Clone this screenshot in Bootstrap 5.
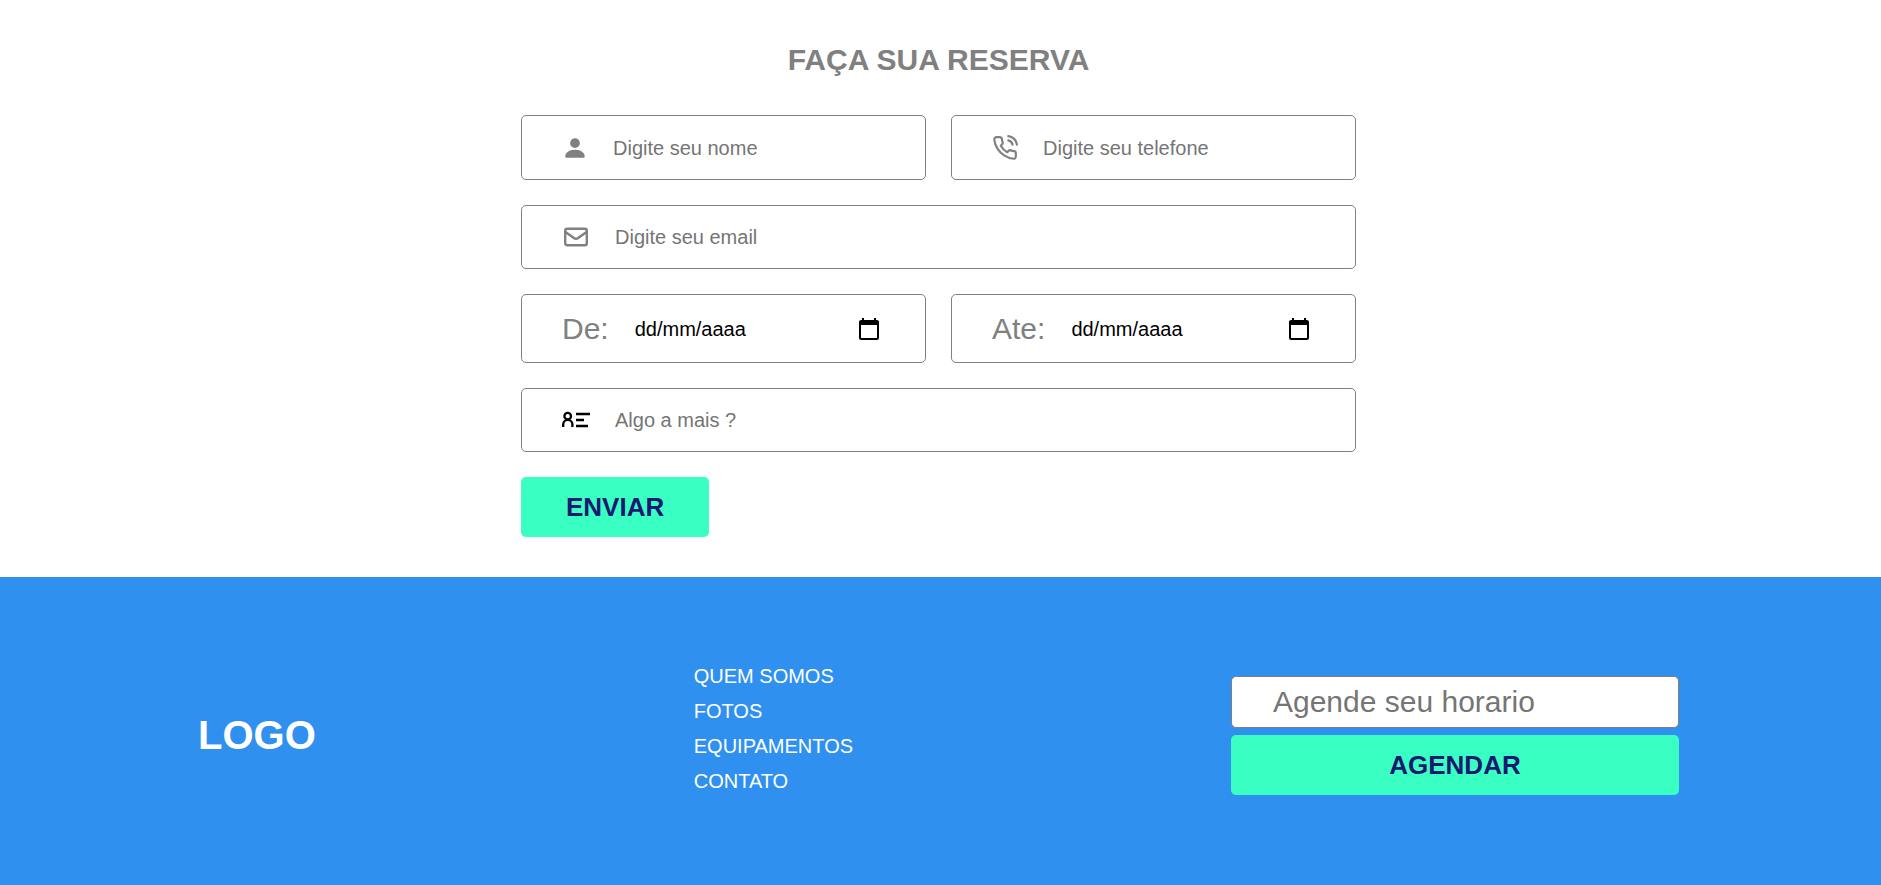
<!DOCTYPE html>
<html lang="pt-BR">
<head>
<meta charset="utf-8">
<meta name="viewport" content="width=device-width, initial-scale=1">
<title>Reserva</title>
<link href="https://cdn.jsdelivr.net/npm/bootstrap@5.3.0/dist/css/bootstrap.min.css" rel="stylesheet">
<style>
  body { font-family: "Liberation Sans", Arial, sans-serif; font-size: 20px; color: #000; background: #fff; }
  .booking { padding-top: 42px; padding-bottom: 40px; }
  .booking form { max-width: 835px; }
  .booking-title { font-size: 30px; line-height: 36px; font-weight: 700; color: #808080; margin-bottom: 37px; }
  .field-grid { display: grid; grid-template-columns: repeat(2, minmax(0, 1fr)); gap: 25px; }
  .span-all { grid-column: 1 / -1; }
  .field { min-height: 64px; padding: 0 40px; gap: 25px; border: 1px solid #808080; border-radius: 5px; }
  .field-short { min-height: 65px; }
  .field-date { min-height: 69px; }
  .field label { color: #808080; font-size: 30px; line-height: 36px; }
  .field label svg { display: block; }
  .field label.dark { color: #000; }
  .field input { flex: 1 1 0; min-width: 0; padding: 0; border: 0; outline: 0; background: transparent; line-height: 24px; }
  input::placeholder { color: #757575; opacity: 1; }
  .field-date input { padding-left: 1px; }
  .field-date input::placeholder { color: #000; }
  .picker { padding: 0; border: 0; background: none; color: #000; }
  .picker svg { display: block; }
  .btn-mint { --bs-btn-bg: #39ffc3; --bs-btn-hover-bg: #22e5aa; --bs-btn-color: #191970; --bs-btn-hover-color: #191970;
    --bs-btn-border-width: 0; font-size: 26px; line-height: 30px; font-weight: 700; padding: 15px 45px; border-radius: 5px; }
  .site-footer { background: #2f90f0; padding-top: 88px; padding-bottom: 80px; }
  .footer-row { max-width: 1481px; }
  .brand { font-size: 40px; line-height: 48px; font-weight: 700; }
  .footer-links li { line-height: 23px; margin-bottom: 12px; }
  .schedule { width: 448px; gap: 7px; }
  .schedule input { font-size: 30px; line-height: 34px; padding: 8px 41px; border: 1px solid #808080; border-radius: 5px; background: #fff; }
</style>
</head>
<body class="d-flex flex-column min-vh-100">
<main class="booking pe-1">
  <form class="mx-auto">
    <h1 class="booking-title text-center">FAÇA SUA RESERVA</h1>
    <div class="field-grid">
      <div class="field field-short d-flex align-items-center">
        <label for="nome" aria-label="Nome"><svg width="26" height="26" viewBox="0 0 16 16" fill="currentColor"><path d="M3 14s-1 0-1-1 1-4 6-4 6 3 6 4-1 1-1 1H3Zm5-6a3 3 0 1 0 0-6 3 3 0 0 0 0 6Z"/></svg></label>
        <input type="text" id="nome" placeholder="Digite seu nome">
      </div>
      <div class="field field-short d-flex align-items-center">
        <label for="telefone" aria-label="Telefone"><svg width="26" height="26" viewBox="0 0 24 24" fill="none" stroke="currentColor" stroke-width="2" stroke-linecap="round" stroke-linejoin="round"><path d="M15.05 5A5 5 0 0 1 19 8.95M15.05 1A9 9 0 0 1 23 8.94M22 16.92v3a2 2 0 0 1-2.18 2 19.79 19.79 0 0 1-8.63-3.07 19.5 19.5 0 0 1-6-6 19.79 19.79 0 0 1-3.07-8.67A2 2 0 0 1 4.11 2h3a2 2 0 0 1 2 1.72 12.84 12.84 0 0 0 .7 2.81 2 2 0 0 1-.45 2.11L8.09 9.91a16 16 0 0 0 6 6l1.27-1.27a2 2 0 0 1 2.11-.45 12.84 12.84 0 0 0 2.81.7A2 2 0 0 1 22 16.92z"/></svg></label>
        <input type="tel" id="telefone" placeholder="Digite seu telefone">
      </div>
      <div class="field span-all d-flex align-items-center">
        <label for="email" aria-label="Email"><svg width="28" height="28" viewBox="0 0 28 28" fill="none" stroke="currentColor" stroke-width="2.400" stroke-linecap="round" stroke-linejoin="round"><rect x="3.200" y="5.700" width="21.600" height="16.600" rx="2"/><path d="M3.500 9l8.700 6.200q1.800 1.200 3.600 0L24.500 9"/></svg></label>
        <input type="email" id="email" placeholder="Digite seu email">
      </div>
      <div class="field field-date d-flex align-items-center">
        <label for="de">De:</label>
        <input type="text" id="de" placeholder="dd/mm/aaaa">
        <button type="button" class="picker me-1" aria-label="Abrir calendário"><svg width="24" height="24" viewBox="0 0 24 24" fill="currentColor"><path d="M20 3h-1V1h-2v2H7V1H5v2H4c-1.100 0-2 .9-2 2v16c0 1.100.9 2 2 2h16c1.100 0 2-.9 2-2V5c0-1.100-.9-2-2-2zm0 18H4V8h16v13z"/></svg></button>
      </div>
      <div class="field field-date d-flex align-items-center">
        <label for="ate">Ate:</label>
        <input type="text" id="ate" placeholder="dd/mm/aaaa">
        <button type="button" class="picker me-1" aria-label="Abrir calendário"><svg width="24" height="24" viewBox="0 0 24 24" fill="currentColor"><path d="M20 3h-1V1h-2v2H7V1H5v2H4c-1.100 0-2 .9-2 2v16c0 1.100.9 2 2 2h16c1.100 0 2-.9 2-2V5c0-1.100-.9-2-2-2zm0 18H4V8h16v13z"/></svg></button>
      </div>
      <div class="field span-all d-flex align-items-center">
        <label for="extra" class="dark" aria-label="Observações"><svg width="28" height="28" viewBox="0 0 28 28" fill="none" stroke="currentColor" stroke-width="2.300"><circle cx="5.700" cy="10.200" r="3.300"/><path d="M1.200 21v-2.500a4.600 4.600 0 0 1 9.200 0V21M14 8h14M14 14h8M14 20h12"/></svg></label>
        <input type="text" id="extra" placeholder="Algo a mais ?">
      </div>
      <div class="span-all"><button type="submit" class="btn btn-mint d-block">ENVIAR</button></div>
    </div>
  </form>
</main>
<footer class="site-footer pe-1 flex-grow-1 text-white">
  <div class="footer-row mx-auto d-flex justify-content-between align-items-center">
    <div class="brand">LOGO</div>
    <ul class="footer-links list-unstyled mb-0">
      <li><a href="#" class="text-white text-decoration-none">QUEM SOMOS</a></li>
      <li><a href="#" class="text-white text-decoration-none">FOTOS</a></li>
      <li><a href="#" class="text-white text-decoration-none">EQUIPAMENTOS</a></li>
      <li><a href="#" class="text-white text-decoration-none">CONTATO</a></li>
    </ul>
    <form class="schedule d-flex flex-column">
      <input type="text" placeholder="Agende seu horario" aria-label="Agende seu horario">
      <button type="submit" class="btn btn-mint">AGENDAR</button>
    </form>
  </div>
</footer>
<script src="https://cdn.jsdelivr.net/npm/bootstrap@5.3.0/dist/js/bootstrap.bundle.min.js"></script>
</body>
</html>
